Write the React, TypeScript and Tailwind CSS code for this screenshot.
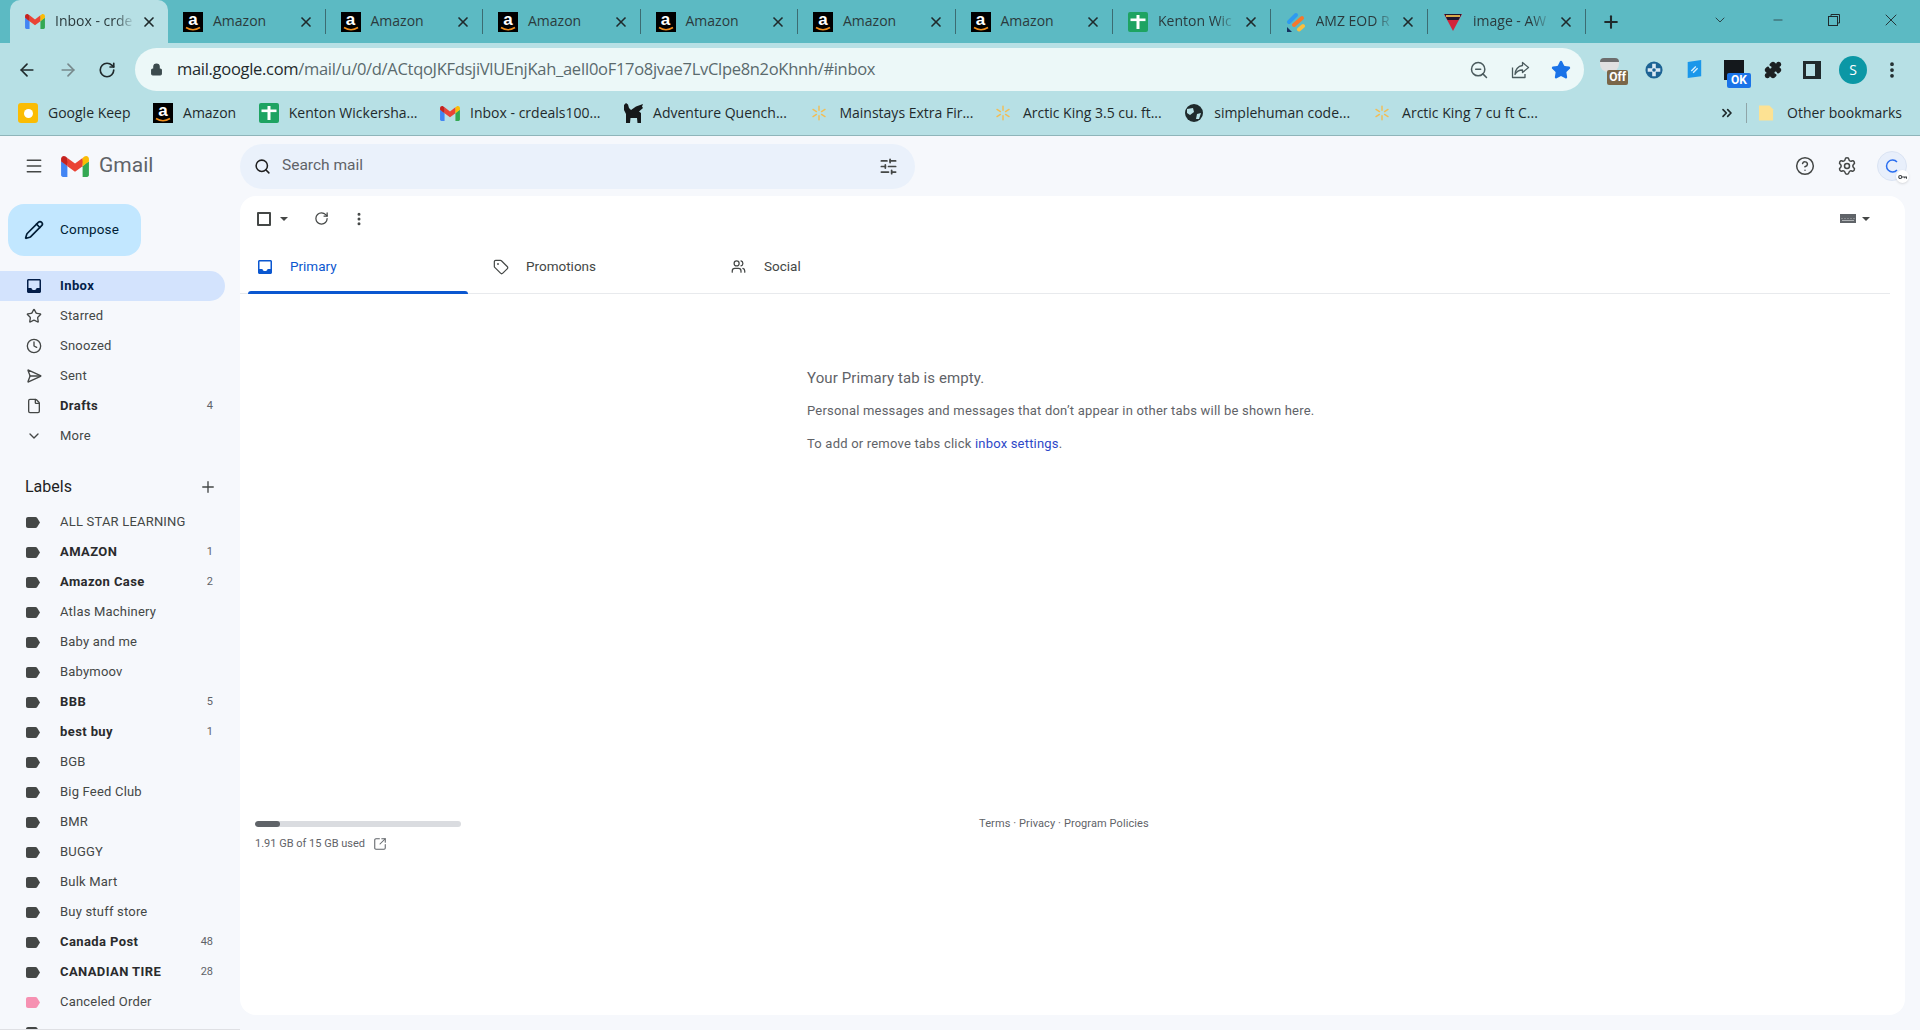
import { ArrowLeft, ArrowRight, RotateCw, Lock, ZoomOut, Star, Puzzle, EllipsisVertical, Plus, X, Minus, ChevronDown, Menu, Search, SlidersHorizontal, Pencil, Clock, SendHorizontal, File, CircleHelp, Settings, Tag, Users, SquareArrowOutUpRight, ChevronsRight } from "lucide-react";

function GmailM({ className }: { className: string }) {
  return (
    <svg viewBox="0 0 256 193" className={className}>
      <path fill="#4285F4" d="M58.182 192.05V93.14L27.507 65.077 0 49.504v125.091c0 9.658 7.825 17.455 17.455 17.455h40.727Z" />
      <path fill="#34A853" d="M197.818 192.05h40.727c9.659 0 17.455-7.826 17.455-17.455V49.505l-31.156 17.837-27.026 25.798v98.91Z" />
      <path fill="#EA4335" d="m58.182 93.14-4.174-38.647 4.174-36.989L128 69.868l69.818-52.364 4.669 34.992-4.669 40.644L128 145.504z" />
      <path fill="#FBBC04" d="M197.818 17.504V93.14L256 49.504V26.231c0-21.585-24.64-33.89-41.89-20.945l-16.292 12.218Z" />
      <path fill="#C5221F" d="m0 49.504 26.759 20.07L58.182 93.14V17.504L41.89 5.286C24.61-7.66 0 4.646 0 26.23v23.273Z" />
    </svg>
  );
}

function AmazonIcon() {
  return (
    <div className="relative flex h-5 w-5 shrink-0 justify-center bg-black font-['Liberation_Sans',sans-serif] text-[17px] font-bold leading-[15px] text-white">
      a
      <svg viewBox="0 0 20 6" className="absolute bottom-0 left-0 h-[6px] w-5">
        <path d="M3 1.5 Q10 6 17 1.5" fill="none" stroke="#f08f1d" strokeWidth="1.6" />
      </svg>
    </div>
  );
}

function SheetIcon() {
  return (
    <svg viewBox="0 0 20 20" className="h-5 w-5 shrink-0">
      <rect x="0" y="0" width="20" height="20" rx="2" fill="#1ea362" />
      <rect x="8.500" y="3" width="3" height="14" fill="#fff" />
      <rect x="2.500" y="6.500" width="15" height="2.600" fill="#fff" />
    </svg>
  );
}

function EodIcon() {
  return (
    <svg viewBox="0 0 20 20" className="h-5 w-5 shrink-0" fill="none" strokeLinecap="round" strokeWidth="4">
      <path d="M3 10L10 3" stroke="#2e9bf0" />
      <path d="M8 13L16 6" stroke="#f7772b" />
      <path d="M13 17.500L17 14" stroke="#fbbf3c" />
      <path d="M1 15V20H6Z" fill="#15305f" strokeWidth="0" />
    </svg>
  );
}

function PennantIcon() {
  return (
    <svg viewBox="0 0 20 20" className="h-5 w-5 shrink-0">
      <path d="M1 2 H19 L10 19 Z" fill="#d3233a" />
      <path d="M1.500 2 H18.500 L15.500 8 H4.500 Z" fill="#21162e" />
      <rect x="3" y="3" width="14" height="2" fill="#d9a94a" />
    </svg>
  );
}

function Spark() {
  return (
    <div className="flex h-5 w-5 shrink-0 items-center justify-center">
      <svg viewBox="0 0 20 20" className="h-4 w-4" stroke="#f2bd55" strokeWidth="1.800" strokeLinecap="round">
        <path d="M10 1.500V6.500M10 13.500V18.500M2.500 5.500L6.800 8.200M13.200 11.800L17.500 14.500M2.500 14.500L6.800 11.800M13.200 8.200L17.500 5.500" />
      </svg>
    </div>
  );
}

function LionIcon() {
  return (
    <svg viewBox="0 0 20 20" className="h-5 w-5 shrink-0" fill="#15181a">
      <path d="M1 2L3 0L5 1.500L6 5L8 7L13 3.500L20 1L19 3.500L20 5L16 8.500L18 10V20H14.500L14 15H7.500L7 20H3V11L1 7Z" />
    </svg>
  );
}

function LabelIcon({ color = "#444746" }: { color?: string }) {
  return (
    <svg viewBox="0 0 14 11" className="h-[11px] w-[14px] shrink-0">
      <path d="M2 0H9.500C10.200 0 10.800.3 11.200.9L14 5.500 11.200 10.100C10.800 10.700 10.200 11 9.500 11H2C.9 11 0 10.100 0 9V2C0 .9.900 0 2 0Z" fill={color} />
    </svg>
  );
}

function InboxIcon({ color, className }: { color: string; className: string }) {
  return (
    <svg viewBox="0 0 14 14" className={className} fill={color}>
      <path d="M1.500 0H12.500C13.300 0 14 .7 14 1.500V12.500C14 13.300 13.300 14 12.500 14H1.500C.7 14 0 13.300 0 12.500V1.500C0 .7.700 0 1.500 0ZM1.500 9H4.500C4.500 10.400 5.600 11 7 11S9.500 10.400 9.500 9H12.500V1.500H1.500Z" fillRule="evenodd" />
    </svg>
  );
}

const tabs = [
  { title: "Amazon", icon: <AmazonIcon /> },
  { title: "Amazon", icon: <AmazonIcon /> },
  { title: "Amazon", icon: <AmazonIcon /> },
  { title: "Amazon", icon: <AmazonIcon /> },
  { title: "Amazon", icon: <AmazonIcon /> },
  { title: "Amazon", icon: <AmazonIcon /> },
  { title: "Kenton Wic", icon: <SheetIcon />, fade: true },
  { title: "AMZ EOD R", icon: <EodIcon />, fade: true },
  { title: "image - AW", icon: <PennantIcon />, fade: true },
];

const bookmarks = [
  { title: "Google Keep", gap: "mr-[22.500px]", icon: <div className="flex h-5 w-5 shrink-0 items-center justify-center rounded-[3px] bg-[#fbbc04]"><div className="h-[9px] w-[9px] rounded-full bg-white" /></div> },
  { title: "Amazon", gap: "mr-[22.500px]", icon: <AmazonIcon /> },
  { title: "Kenton Wickersha...", gap: "mr-[22.500px]", icon: <SheetIcon /> },
  { title: "Inbox - crdeals100...", gap: "mr-[22.500px]", icon: <GmailM className="h-[15px] w-5 shrink-0" /> },
  { title: "Adventure Quench...", gap: "mr-[22.500px]", icon: <LionIcon /> },
  { title: "Mainstays Extra Fir...", gap: "mr-[19.500px]", icon: <Spark /> },
  { title: "Arctic King 3.5 cu. ft...", gap: "mr-[22.500px]", icon: <Spark /> },
  {
    title: "simplehuman code...",
    gap: "mr-[22px]",
    icon: (
      <svg viewBox="0 0 20 20" className="h-5 w-5 shrink-0">
        <circle cx="10" cy="10" r="9" fill="#1f2a2c" />
        <path d="M3 6 L9 5 L10 9 L6 12 L3 10 Z M13 11 L17 10 L15 16 L12 16 Z" fill="#b7e0e5" />
      </svg>
    ),
  },
  { title: "Arctic King 7 cu ft C...", gap: "mr-[22.500px]", icon: <Spark /> },
];

const labels: { name: string; count?: number; color?: string; bold?: boolean }[] = [
  { name: "ALL STAR LEARNING" },
  { name: "AMAZON", count: 1, bold: true },
  { name: "Amazon Case", count: 2, bold: true },
  { name: "Atlas Machinery" },
  { name: "Baby and me" },
  { name: "Babymoov" },
  { name: "BBB", count: 5, bold: true },
  { name: "best buy", count: 1, bold: true },
  { name: "BGB" },
  { name: "Big Feed Club" },
  { name: "BMR" },
  { name: "BUGGY" },
  { name: "Bulk Mart" },
  { name: "Buy stuff store" },
  { name: "Canada Post", count: 48, bold: true },
  { name: "CANADIAN TIRE", count: 28, bold: true },
  { name: "Canceled Order", color: "#f691b2" },
  { name: "career", bold: true },
];

function NavRow({ icon, name, count, bold }: { icon: React.ReactNode; name: string; count?: number; bold?: boolean }) {
  return (
    <div className="flex h-[30px] w-[225px] shrink-0 items-center pl-[26px] pr-3 text-[13px] text-[#444746]">
      <div className="flex w-[34px] shrink-0 items-center">{icon}</div>
      <span className={bold ? "font-bold tracking-[0.4px] text-[#2a2b2d]" : "tracking-[0.2px]"}>{name}</span>
      {count !== undefined && <span className="ml-auto text-[11px] text-[#5f6368]">{count}</span>}
    </div>
  );
}

export default function App() {
  return (
    <div className="flex h-[1030px] w-[1920px] flex-col overflow-hidden bg-[#f6f8fc] font-['Roboto',sans-serif]">
      {/* Tab strip */}
      <header className="flex h-[43px] shrink-0 items-stretch bg-[#5cbac3] pl-[10px] font-['Open_Sans',sans-serif] text-[14px] text-[#2b3a3d]">
        <div className="flex w-[158px] shrink-0 items-center rounded-t-[10px] bg-[#b7e0e5] pl-[15px] pr-[11px]">
          <GmailM className="h-[15px] w-5 shrink-0" />
          <span className="-mt-[2px] ml-[10px] w-[80px] whitespace-nowrap [mask-image:linear-gradient(to_right,black_75%,transparent)]">Inbox - crde</span>
          <X className="ml-auto h-4 w-4 text-[#1f2a2c]" strokeWidth={2.5} />
        </div>
        {tabs.map((t, i) => (
          <div key={i} className="flex w-[157.500px] shrink-0 items-center pl-[15px] pr-[11px]">
            {t.icon}
            <span className={t.fade ? "-mt-[2px] ml-[10px] w-[78px] whitespace-nowrap [mask-image:linear-gradient(to_right,black_75%,transparent)]" : "-mt-[2px] ml-[10px] w-[78px] whitespace-nowrap"}>{t.title}</span>
            <X className="ml-auto h-4 w-4 shrink-0 text-[#1f2a2c]" strokeWidth={2.5} />
            <div className="ml-[11px] mr-[-11px] h-[25px] w-px shrink-0 bg-[#3c6c72]" />
          </div>
        ))}
        <div className="flex w-[50px] items-center justify-center">
          <Plus className="h-5 w-5 text-[#1f2a2c]" strokeWidth={2.5} />
        </div>
        <div className="ml-auto flex items-center pb-[3px] text-[#1f2a2c]">
          <ChevronDown className="mr-[43px] h-4 w-4" strokeWidth={1.2} />
          <Minus className="mr-[42px] h-3.5 w-3.5" strokeWidth={1.2} />
          <svg viewBox="0 0 14 14" className="mr-[40px] h-3.5 w-3.5" fill="none" stroke="currentColor"><rect x="1.500" y="3.500" width="9" height="9" /><path d="M4 3.500V1.500H12.500V10H10.500" /></svg>
          <X className="mr-[19px] h-5 w-5" strokeWidth={1.1} />
        </div>
      </header>

      {/* Address bar */}
      <div className="flex h-[48px] shrink-0 items-center bg-[#b7e0e5] pt-[5px]">
        <ArrowLeft className="ml-[17px] h-5 w-5 text-[#202a2c]" strokeWidth={2} />
        <ArrowRight className="ml-[21px] h-5 w-5 text-[#77898c]" strokeWidth={2} />
        <RotateCw className="ml-[20px] h-[18px] w-[18px] text-[#202a2c]" strokeWidth={2.2} />
        <div className="ml-[19px] flex h-[43px] w-[1449px] shrink-0 items-center rounded-full bg-[#ecf8f8] pl-[15px] pr-[13px]">
          <Lock className="h-[13px] w-[13px] text-[#3c4b4e]" fill="currentColor" />
          <span className="ml-[14px] font-['Open_Sans',sans-serif] text-[16.500px] tracking-[-0.3px] text-[#5a6a6d]">
            <span className="text-[#1f2a2c]">mail.google.com</span>/mail/u/0/d/ACtqoJKFdsjiVlUEnjKah_aeIl0oF17o8jvae7LvClpe8n2oKhnh/#inbox
          </span>
          <div className="ml-auto flex items-center gap-[21px]">
            <ZoomOut className="h-5 w-5 text-[#4a5a5d]" strokeWidth={1.8} />
            <svg viewBox="0 0 20 20" className="h-5 w-5 text-[#4a5a5d]" fill="none" stroke="currentColor" strokeWidth="1.300" strokeLinejoin="round">
              <path d="M2.500 7.500V17.500H15V14" />
              <path d="M12.500 2.500L18.500 7.500L12.500 12.500V10C9 10 6.500 11.500 5 14.500C5 10 8 6 12.500 5.500Z" />
            </svg>
            <Star className="h-5 w-5 text-[#1a73e8]" fill="currentColor" />
          </div>
        </div>
        <div className="ml-auto flex items-center pr-[18px]">
          <div className="relative mr-[17px] h-6 w-[28px]">
            <div className="absolute left-0 top-0 h-[14px] w-[19px] rounded-b-lg rounded-t-sm border-t-4 border-[#6d6d6d] bg-[#e0e0e0]" />
            <div className="absolute bottom-[-3px] right-0 rounded-[2px] bg-[#7a6648] px-[2px] text-[12px] font-bold leading-[15px] text-white">Off</div>
          </div>
          <svg viewBox="0 0 20 20" className="mr-[22px] h-[18px] w-[18px]">
            <circle cx="10" cy="10" r="9.500" fill="#1d6394" />
            <path d="M8 3H12V8H17V12H12V17H8V12H3V8H8Z" fill="#dbe9f3" />
            <circle cx="10" cy="10" r="2" fill="#1d6394" />
          </svg>
          <svg viewBox="0 0 20 22" className="mr-[21px] h-5 w-[18px]">
            <path d="M3 2 L18 0 L18 18 L3 20 Z" fill="#1a97ea" />
            <path d="M7 12 L12 7 M9 14 L14 9" stroke="#d7efff" strokeWidth="1.500" />
          </svg>
          <div className="relative mr-[20px] h-5 w-5 bg-[#14181c]">
            <div className="absolute -bottom-[8px] -right-[7px] rounded-[2px] bg-[#1a73e8] px-[4px] text-[12px] font-bold leading-[15px] text-white">OK</div>
          </div>
          <Puzzle className="mr-[21px] h-[18px] w-[18px] text-[#1c2022]" fill="currentColor" />
          <div className="mr-[18px] h-[18px] w-[18px] border-[3px] border-r-[6px] border-[#202a2c] bg-[#b7e0e5]" />
          <div className="mr-[15px] flex h-7 w-7 items-center justify-center rounded-full bg-[#0b97a5] font-['Open_Sans',sans-serif] text-[14px] text-white">S</div>
          <EllipsisVertical className="h-5 w-5 text-[#202a2c]" strokeWidth={2.5} />
        </div>
      </div>

      {/* Bookmarks */}
      <div className="flex h-[45px] shrink-0 items-center border-b border-[#8fb5ba] bg-[#b7e0e5] pl-[18px] font-['Open_Sans',sans-serif] text-[14px] text-[#1f2a2c]">
        {bookmarks.map((b) => (
          <div key={b.title} className={`${b.gap} flex items-center`}>
            {b.icon}
            <span className="-mt-[2px] ml-[10px]">{b.title}</span>
          </div>
        ))}
        <div className="ml-auto flex items-center pr-[18px]">
          <ChevronsRight className="h-4 w-4" strokeWidth={2.5} />
          <div className="ml-[11px] h-[20px] w-px bg-[#8fa5a8]" />
          <svg viewBox="0 0 16 18" className="ml-[12px] h-[18px] w-[15px]"><path d="M0 1H11L15 5V17H0Z" fill="#fde293" /></svg>
          <span className="-mt-[2px] ml-[13px]">Other bookmarks</span>
        </div>
      </div>

      {/* Gmail */}
      <div className="flex min-h-0 flex-1">
        <aside className="relative flex w-[240px] shrink-0 flex-col overflow-hidden">
          <div className="flex h-[60px] shrink-0 items-center pl-[24px]">
            <Menu className="h-5 w-5 text-[#444746]" strokeWidth={1.8} />
            <GmailM className="ml-[17px] h-[21px] w-7" />
            <span className="ml-[10px] text-[21px] text-[#5f6368]">Gmail</span>
          </div>
          <div className="ml-2 mt-2 flex h-[52px] w-[133px] shrink-0 items-center rounded-2xl bg-[#c2e7ff] pl-4 text-[13.500px] tracking-[0.2px] text-[#001d35]">
            <Pencil className="h-5 w-5" strokeWidth={2} />
            <span className="ml-4 -mt-[1px]">Compose</span>
          </div>
          <div className="mt-[15px] flex flex-col">
            <div className="flex h-[30px] w-[225px] items-center rounded-r-full bg-[#d3e3fd] pl-[27px] text-[13px] font-bold tracking-[0.4px] text-[#041e49]">
              <InboxIcon color="#041e49" className="mr-[19px] h-[14px] w-[14px] shrink-0" />
              Inbox
            </div>
            <NavRow icon={<Star className="h-4 w-4" strokeWidth={2} />} name="Starred" />
            <NavRow icon={<Clock className="h-4 w-4" strokeWidth={2} />} name="Snoozed" />
            <NavRow icon={<SendHorizontal className="h-4 w-4" strokeWidth={2} />} name="Sent" />
            <NavRow icon={<File className="h-4 w-4" strokeWidth={2} />} name="Drafts" count={4} bold />
            <NavRow icon={<ChevronDown className="h-4 w-4" strokeWidth={2} />} name="More" />
          </div>
          <div className="mt-[21px] flex h-[30px] w-[225px] shrink-0 items-center pl-[25px] pr-[8px] text-[16px] text-[#1f1f1f]">
            Labels
            <Plus className="ml-auto h-[18px] w-[18px] text-[#444746]" strokeWidth={1.8} />
          </div>
          <div className="mt-[5px] flex flex-col">
            {labels.map((l) => (
              <NavRow key={l.name} icon={<LabelIcon color={l.color} />} name={l.name} count={l.count} bold={l.bold} />
            ))}
          </div>
          <div className="absolute bottom-0 left-0 h-px w-full bg-[#dfe0e4]" />
        </aside>

        <div className="flex min-w-0 flex-1 flex-col pr-[15px]">
          {/* Search and account */}
          <div className="flex h-[60px] shrink-0 items-start pt-2">
            <div className="flex h-[45px] w-[675px] items-center rounded-full bg-[#eaf1fb] pl-[14px] pr-[17px]">
              <Search className="-mt-[1px] h-[17px] w-[17px] text-[#1f1f1f]" strokeWidth={2.2} />
              <span className="-mt-[2px] ml-[11px] text-[15.500px] text-[#5f6368]">Search mail</span>
              <SlidersHorizontal className="ml-auto -mt-[1px] h-[19px] w-[19px] text-[#444746]" strokeWidth={2.2} />
            </div>
            <div className="ml-auto mr-[-2px] mt-[7px] flex items-center">
              <CircleHelp className="h-[20px] w-[20px] text-[#444746]" strokeWidth={1.8} />
              <Settings className="ml-[22px] h-[20px] w-[20px] text-[#444746]" strokeWidth={1.8} />
              <div className="relative ml-[20px] flex h-[30px] w-[30px] items-center justify-center rounded-full border border-[#dbe4f3] bg-[#e8effb]">
                <svg viewBox="0 0 14 14" className="h-[14px] w-[14px]" fill="none" stroke="#2a6ef0" strokeWidth="1.500"><path d="M12 3A6 6 0 1 0 12 11" /></svg>
                <div className="absolute -bottom-[3px] -right-[3px] flex h-[13px] w-[13px] items-center justify-center rounded-full bg-white shadow-sm">
                  <svg viewBox="0 0 10 6" className="h-[6px] w-[9px]" fill="none" stroke="#3c4043" strokeWidth="1.200"><circle cx="2.500" cy="3" r="1.700" /><path d="M4.500 3H9.500V5M7.500 3V4.500" /></svg>
                </div>
              </div>
            </div>
          </div>

          {/* Main panel */}
          <main className="flex h-[819px] shrink-0 flex-col rounded-2xl bg-white">
            <div className="flex h-[44px] shrink-0 items-center pl-[17px] pr-[35px] pt-[1px] text-[#444746]">
              <div className="h-[14px] w-[14px] rounded-[1px] border-2 border-[#444746]" />
              <div className="ml-[9px] h-0 w-0 border-x-[4px] border-t-[4px] border-x-transparent border-t-[#444746]" />
              <RotateCw className="ml-[26px] h-[15px] w-[15px]" strokeWidth={2} />
              <EllipsisVertical className="ml-[22px] h-4 w-4" strokeWidth={2.5} />
              <div className="ml-auto flex items-center">
                <svg viewBox="0 0 16 9" className="h-[9px] w-[16px]"><rect width="16" height="9" fill="#5f6368" /><path d="M2 6.500H14M2 4V5M5 4V5M8 4V5M11 4V5M14 4V5" stroke="#c4c6c9" strokeWidth="0.800" /></svg>
                <div className="ml-[6px] h-0 w-0 border-x-[4px] border-t-[4px] border-x-transparent border-t-[#444746]" />
              </div>
            </div>
            <div className="mr-[15px] flex h-[54px] shrink-0 items-stretch border-b border-[#e8eaed] pl-2 text-[13.500px] text-[#444746]">
              <div className="relative flex w-[220px] items-center pl-[10px] text-[#0b57d0]">
                <InboxIcon color="#0b57d0" className="mr-[18px] h-[14px] w-[14px] shrink-0" />
                Primary
                <div className="absolute -bottom-px left-0 h-[3px] w-full rounded-t-[3px] bg-[#0b57d0]" />
              </div>
              <div className="flex w-[238px] items-center pl-[25px]">
                <Tag className="mr-[17px] h-4 w-4" strokeWidth={1.8} />
                Promotions
              </div>
              <div className="flex items-center pl-[25px]">
                <Users className="mr-[18px] h-[15px] w-[15px]" strokeWidth={2} />
                Social
              </div>
            </div>

            <div className="ml-[567px] mt-[74px] flex flex-col text-[13px] tracking-[0.2px] text-[#5f6368]">
              <p className="h-[20px] text-[15px] leading-[20px] tracking-[0.1px]">Your Primary tab is empty.</p>
              <p className="mt-[13px] leading-[20px]">Personal messages and messages that don’t appear in other tabs will be shown here.</p>
              <p className="mt-[13px] leading-[20px]">To add or remove tabs click <span className="text-[#2e48c8]">inbox settings</span>.</p>
            </div>

            <div className="mt-auto flex h-[194px] shrink-0 items-start pl-[15px] text-[11px] text-[#5f6368]">
              <div className="w-[206px]">
                <div className="h-[6px] w-full overflow-hidden rounded-full bg-[#dadce0]">
                  <div className="h-full w-[25px] rounded-full bg-[#5f6368]" />
                </div>
                <div className="mt-[9px] flex items-center">
                  1.91 GB of 15 GB used
                  <SquareArrowOutUpRight className="ml-2 h-[14px] w-[14px]" strokeWidth={1.8} />
                </div>
              </div>
              <div className="ml-[518px] mt-[-5px] tracking-[0.1px]">Terms · Privacy · Program Policies</div>
            </div>
          </main>
        </div>
      </div>
    </div>
  );
}
